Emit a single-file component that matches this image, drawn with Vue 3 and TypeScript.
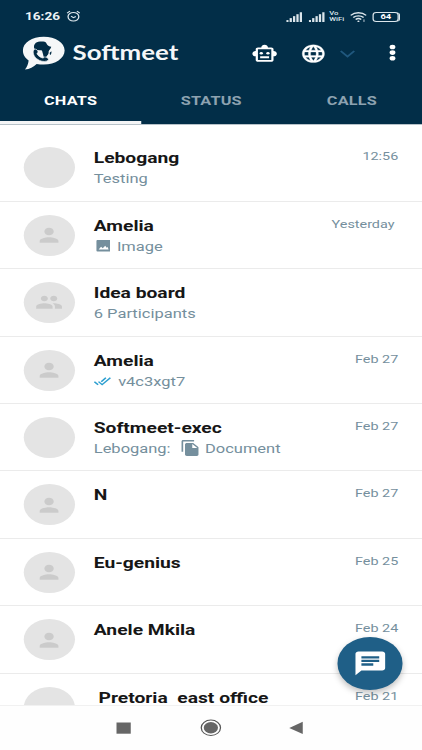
<script setup lang="ts">
type Avatar = 'blank' | 'person' | 'group'
type Attachment = 'image' | 'read' | 'document'

interface Chat {
  name: string
  avatar: Avatar
  date: string
  dateInset?: boolean
  sender?: string
  icon?: Attachment
  preview?: string
}

const tabs: string[] = ['CHATS', 'STATUS', 'CALLS']
const signalLevels: number[] = [1, 2, 3, 4, 5]

const chats: Chat[] = [
  { name: 'Lebogang', avatar: 'blank', date: '12:56', preview: 'Testing' },
  { name: 'Amelia', avatar: 'person', date: 'Yesterday', dateInset: true, icon: 'image', preview: 'Image' },
  { name: 'Idea board', avatar: 'group', date: '', preview: '6 Participants' },
  { name: 'Amelia', avatar: 'person', date: 'Feb 27', icon: 'read', preview: 'v4c3xgt7' },
  { name: 'Softmeet-exec', avatar: 'blank', date: 'Feb 27', sender: 'Lebogang:', icon: 'document', preview: 'Document' },
  { name: 'N', avatar: 'person', date: 'Feb 27' },
  { name: 'Eu-genius', avatar: 'person', date: 'Feb 25' },
  { name: 'Anele Mkila', avatar: 'person', date: 'Feb 24' },
  { name: ' Pretoria  east office', avatar: 'blank', date: 'Feb 21' },
]
</script>

<template>
  <div class="viewport">
    <div class="phone">
      <header class="header">
        <div class="status-bar">
          <span class="clock">16:26</span>
          <svg class="alarm" viewBox="0 0 12 13" fill="none" stroke="#dce6ec" stroke-width="1.1">
            <circle cx="6" cy="7" r="4.5" />
            <path d="M4 6.4l2 1.6 2-1.2M.7 3.2l2.4-2M11.3 3.2l-2.400-2" />
          </svg>
          <div class="status-icons">
            <svg v-for="n in 2" :key="n" class="signal" viewBox="0 0 13 10" fill="#dce6ec">
              <rect v-for="l in signalLevels" :key="l" :x="(l - 1) * 2.7" :y="10 - l * 1.95" width="1.8" :height="l * 1.95" />
            </svg>
            <span class="vowifi"><span>Vo</span><span>WiFi</span></span>
            <svg class="wifi" viewBox="0 0 14 11" fill="none" stroke="#dce6ec" stroke-width="1.35">
              <path d="M.6 3.8C4.2.2 9.8.2 13.4 3.8M2.7 6c2.4-2.3 6.2-2.3 8.6 0M4.7 8.1c1.3-1.2 3.3-1.2 4.6 0" />
              <circle cx="7" cy="9.900" r=".9" fill="#dce6ec" stroke="none" />
              <path d="M11.600 8v2.600" stroke-width=".8" />
            </svg>
            <span class="battery">64</span>
          </div>
        </div>

        <div class="app-bar">
          <svg class="logo" viewBox="0 0 34 34">
            <path fill="#f5f7f8" d="M17 .7C7.600.7.300 6.700.300 14.500c0 4.400 2 7.700 4.600 9.900C4.700 27.500 3.600 30.700 2 33.600c3.600-.7 7-2.800 9.300-5.700 1.800.4 3.700.6 5.700.6 9.400 0 16.700-6.200 16.700-14S26.400.7 17 .7z" />
            <path fill="#022c45" d="M9.400 8.900c.8-1.500 1.700-2.800 3.200-3.100 1.700-.4 3.500-.6 5.100 0 1.300.6 1.500 2 2.100 3 .8.900 1.500 1.700 3.200 2-.2 2-1.700 3.100-2.100 4.700.2 1.700-.3 3-1.200 4.100-.4 1.200-1.200 2-2.300 1.800-1-1.300-.7-2.800-1.200-4.100-.4-1.200-.2-2.400-1.100-3-1.900-.3-4.300.2-5.400-1.600-.7-1.200-.6-2.500-.3-3.800z" />
            <path fill="#022c45" stroke="#f5f7f8" stroke-width=".6" d="M9.600 13.300c1.500-.9 2.900 1.500 2.900 3l-1 1.100c.9 2.400 2.600 4 4.900 4.700l1.200-1.100c1.500-.1 3.700 1.600 3.100 2.900-1.500 2-4.500 2-7.100.5-3.300-2-5.300-5.400-5-8.900.1-1 .4-1.800 1-2.200z" />
            <path fill="#022c45" d="M21.900 16.500l1.200-1.200c.2 1.400 0 2.700-.8 3.700-.6-.8-.6-1.600-.4-2.500z" />
          </svg>
          <h1 class="brand">Softmeet</h1>
          <svg class="robot" viewBox="0 0 24 24" fill="#fff">
            <path d="M20 9V7c0-1.100-.9-2-2-2h-3c0-1.660-1.340-3-3-3S9 3.340 9 5H6c-1.100 0-2 .9-2 2v2c-1.660 0-3 1.340-3 3s1.340 3 3 3v4c0 1.100.9 2 2 2h12c1.100 0 2-.9 2-2v-4c1.660 0 3-1.340 3-3s-1.340-3-3-3zm-2 10H6V7h12v12z" />
            <circle cx="9" cy="11.500" r="1.500" />
            <circle cx="15" cy="11.500" r="1.500" />
            <path d="M8 15h8v2H8z" />
          </svg>
          <svg class="globe" viewBox="0 0 24 24" fill="#fff">
            <path d="M11.990 2C6.470 2 2 6.480 2 12s4.470 10 9.990 10C17.520 22 22 17.520 22 12S17.520 2 11.990 2zm6.930 6h-2.950c-.32-1.250-.78-2.450-1.380-3.560 1.840.63 3.370 1.910 4.330 3.560zM12 4.040c.83 1.200 1.480 2.530 1.910 3.960h-3.820c.43-1.430 1.080-2.760 1.910-3.960zM4.260 14C4.100 13.360 4 12.690 4 12s.1-1.360.26-2h3.380c-.08.66-.14 1.320-.14 2 0 .68.06 1.340.14 2H4.260zm.82 2h2.950c.32 1.250.78 2.450 1.380 3.560-1.840-.63-3.370-1.900-4.330-3.560zm2.950-8H5.080c.96-1.660 2.490-2.930 4.330-3.560C8.810 5.550 8.350 6.750 8.030 8zM12 19.960c-.83-1.200-1.480-2.530-1.910-3.960h3.820c-.43 1.430-1.080 2.760-1.910 3.960zM14.340 14H9.660c-.09-.66-.16-1.320-.16-2 0-.68.07-1.350.16-2h4.680c.09.65.16 1.320.16 2 0 .68-.07 1.340-.16 2zm.25 5.560c.6-1.110 1.060-2.310 1.380-3.560h2.950c-.96 1.650-2.490 2.930-4.330 3.560zM16.360 14c.08-.66.14-1.320.14-2 0-.68-.06-1.340-.14-2h3.380c.16.64.26 1.310.26 2s-.1 1.360-.26 2h-3.380z" stroke="#fff" stroke-width=".3" />
          </svg>
          <svg class="chevron" viewBox="0 0 12 8" fill="none" stroke="#20587e" stroke-width="1.700">
            <path d="M.6 1L6 6.600 11.400 1" />
          </svg>
          <svg class="dots" viewBox="0 0 6 18" fill="#fff">
            <circle cx="3" cy="3" r="2.300" />
            <circle cx="3" cy="8.600" r="2.300" />
            <circle cx="3" cy="14.200" r="2.300" />
          </svg>
        </div>

        <nav class="tabs">
          <span v-for="(tab, i) in tabs" :key="tab" class="tab" :class="{ active: i === 0 }">{{ tab }}</span>
        </nav>
      </header>

      <main class="list">
        <article v-for="(chat, i) in chats" :key="i" class="chat">
          <div class="avatar">
            <svg v-if="chat.avatar === 'person'" viewBox="0 0 24 24" fill="#cbcbcb">
              <path d="M12 12c2.210 0 4-1.790 4-4s-1.790-4-4-4-4 1.790-4 4 1.790 4 4 4zm0 2c-2.670 0-8 1.340-8 4v2h16v-2c0-2.660-5.330-4-8-4z" />
            </svg>
            <svg v-else-if="chat.avatar === 'group'" viewBox="0 0 24 24" fill="#cbcbcb">
              <path d="M16 11c1.660 0 2.990-1.340 2.990-3S17.660 5 16 5c-1.660 0-3 1.340-3 3s1.340 3 3 3zm-8 0c1.660 0 2.990-1.340 2.990-3S9.660 5 8 5C6.340 5 5 6.340 5 8s1.340 3 3 3zm0 2c-2.330 0-7 1.170-7 3.500V19h14v-2.500c0-2.330-4.670-3.500-7-3.500zm8 0c-.29 0-.62.02-.97.05 1.160.84 1.970 1.970 1.970 3.450V19h6v-2.500c0-2.330-4.670-3.500-7-3.500z" />
            </svg>
          </div>
          <div class="body">
            <h2 class="name">{{ chat.name }}</h2>
            <p v-if="chat.preview" class="preview">
              <span v-if="chat.sender" class="sender">{{ chat.sender }}</span>
              <svg v-if="chat.icon === 'image'" class="icon-image" viewBox="0 0 12 12">
                <rect width="12" height="12" rx="1" fill="#758f9d" />
                <path d="M2 9.800l2-2.800 1.400 1.600L7.500 6l1.200 2 .8-.8.800 2.600z" fill="#fff" />
              </svg>
              <svg v-else-if="chat.icon === 'read'" class="icon-read" viewBox="0 0 14 9" fill="none" stroke="#2d9fd0" stroke-width="1.300">
                <path d="M.5 4.800l3 3M3.800 4.600l2.900 3L13.300.8M6 4.700L9.700.8" />
              </svg>
              <svg v-else-if="chat.icon === 'document'" class="icon-document" viewBox="2 1 19 22" fill="#758f9d">
                <path d="M16 1H4c-1.100 0-2 .9-2 2v14h2V3h12V1zm-1 4l6 6v10c0 1.100-.9 2-2 2H7.990C6.890 23 6 22.100 6 21l.01-14c0-1.100.89-2 1.990-2h7zm-1 7h5.500L14 6.500V12z" />
              </svg>
              <span>{{ chat.preview }}</span>
            </p>
          </div>
          <time class="date" :class="{ inset: chat.dateInset }">{{ chat.date }}</time>
        </article>
      </main>

      <footer class="nav-bar">
        <svg viewBox="0 0 18 18" fill="#666"><rect x="3.200" y="3.500" width="11.400" height="11.200" /></svg>
        <svg viewBox="0 0 18 18">
          <circle cx="8.700" cy="8.800" r="7.700" fill="none" stroke="#555" stroke-width="1" />
          <circle cx="8.700" cy="8.800" r="5.700" fill="#666" />
        </svg>
        <svg viewBox="0 0 18 18" fill="#666"><path d="M1.400 8.900L12.200 2.700v12.400z" /></svg>
      </footer>

      <button class="fab" aria-label="New chat">
        <svg viewBox="0 0 24 24" fill="#fff">
          <path d="M20 2H4c-1.100 0-1.990.9-1.990 2L2 22l4-4h14c1.100 0 2-.9 2-2V4c0-1.100-.9-2-2-2zM6 9h12v2H6V9zm8 5H6v-2h8v2zm4-6H6V6h12v2z" />
        </svg>
      </button>
    </div>
  </div>
</template>

<style>
body {
  margin: 0;
  background: #fff;
}
</style>

<style scoped>
.viewport {
  width: 422px;
  height: 750px;
  overflow: hidden;
}

/* Narrow layout widened to fill the window */
.phone {
  position: relative;
  display: flex;
  flex-direction: column;
  width: 337.6px;
  height: 750px;
  overflow: hidden;
  transform: scaleX(1.25);
  transform-origin: 0 0;
  background: #fff;
  font-family: Roboto, "Liberation Sans", sans-serif;
}

svg {
  display: block;
  flex: none;
}

.header {
  flex: none;
  box-sizing: border-box;
  height: 125px;
  background: #022e48;
  border-bottom: 1px solid #b7c2c9;
  color: #fff;
}

.status-bar {
  display: flex;
  align-items: center;
  height: 33px;
  padding: 0 18.700px 0 20px;
  box-sizing: border-box;
}

.clock {
  font-size: 10.900px;
  font-weight: 700;
  color: #eef3f6;
}

.alarm {
  width: 11.500px;
  height: 12.500px;
  margin-left: 5px;
}

.status-icons {
  display: flex;
  align-items: center;
  margin-left: auto;
}

.signal {
  width: 13px;
  height: 10px;
  margin-right: 4.300px;
}

.vowifi {
  display: flex;
  flex-direction: column;
  width: 12.500px;
  margin: 0 4.500px 0 -0.500px;
  font-size: 6.200px;
  line-height: 5.500px;
  font-weight: 500;
  color: #dce6ec;
}

.wifi {
  width: 13.500px;
  height: 12px;
  margin-right: 4.500px;
}

.battery {
  box-sizing: border-box;
  width: 20.500px;
  height: 10px;
  border: 1px solid #dce6ec;
  border-radius: 3px;
  font-size: 7.500px;
  line-height: 8px;
  font-weight: 700;
  text-align: center;
  box-shadow: 1.500px 0 0 -0.500px #dce6ec;
}

.app-bar {
  display: flex;
  align-items: center;
  height: 42px;
  padding-left: 18.400px;
}

.logo {
  width: 34px;
  height: 34px;
  margin-bottom: 3px;
}

.brand {
  width: 138px;
  margin: 0 0 4px 5.700px;
  font-family: Lato, sans-serif;
  font-size: 20.700px;
  line-height: 24px;
  font-weight: 700;
  color: #f5f7f8;
}

.robot {
  width: 21.400px;
  height: 21.400px;
  margin-left: 5px;
}

.globe {
  width: 21.400px;
  height: 21.400px;
  margin-left: 18px;
}

.chevron {
  width: 12px;
  height: 8px;
  margin-left: 10px;
}

.dots {
  width: 6px;
  height: 18px;
  margin: 0 0 2px 27px;
}

.tabs {
  display: grid;
  grid-template-columns: repeat(3, 1fr);
  height: 49px;
}

.tab {
  box-sizing: border-box;
  height: 49px;
  padding: 17px 0 0 0.400px;
  text-align: center;
  font-size: 13px;
  line-height: 18px;
  font-weight: 700;
  letter-spacing: 0.150px;
  color: #8da2b0;
}

.tab.active {
  color: #fff;
  border-bottom: 3px solid #f4f5f6;
}

.list {
  flex: 1;
  min-height: 0;
  padding-top: 9.300px;
  overflow: hidden;
}

.chat {
  display: flex;
  box-sizing: border-box;
  height: 67.430px;
  padding: 13px 19px 0 19px;
  border-bottom: 1px solid #ebebeb;
}

.avatar {
  flex: none;
  display: flex;
  align-items: center;
  justify-content: center;
  width: 41px;
  height: 41px;
  border-radius: 50%;
  background: #e4e4e4;
}

.avatar svg {
  width: 22.500px;
  height: 22.500px;
}

.body {
  flex: 1;
  margin-left: 15px;
  padding-top: 1px;
}

.name {
  margin: 0;
  font-size: 15.400px;
  line-height: 20px;
  font-weight: 700;
  white-space: pre;
  color: #161616;
}

.preview {
  display: flex;
  align-items: center;
  margin: 0;
  height: 21px;
  font-size: 13.200px;
  line-height: 21px;
  white-space: nowrap;
  color: #758f9d;
}

.sender {
  margin-right: 8.500px;
}

.icon-image {
  width: 11.500px;
  height: 11.500px;
  margin: 0 5.500px 0 1.500px;
}

.icon-read {
  width: 14px;
  height: 9px;
  margin-right: 5.500px;
}

.icon-document {
  width: 14px;
  height: 16px;
  margin-right: 5px;
}

.date {
  padding-top: 2px;
  font-size: 11.500px;
  line-height: 15px;
  color: #758f9d;
}

.date.inset {
  padding-right: 3px;
}

.nav-bar {
  flex: none;
  display: flex;
  justify-content: center;
  gap: 52px;
  box-sizing: border-box;
  height: 45.500px;
  padding-top: 13px;
  border-top: 1px solid #f1f1f1;
  background: #fefefe;
}

.nav-bar svg {
  width: 18px;
  height: 18px;
}

.fab {
  position: absolute;
  right: 15.200px;
  bottom: 60.200px;
  display: flex;
  align-items: center;
  justify-content: center;
  width: 52.600px;
  height: 52.600px;
  padding: 0;
  border: 0;
  border-radius: 50%;
  background: #1f5f87;
  box-shadow: 0 3px 6px rgba(0, 0, 0, 0.25);
}

.fab svg {
  width: 28.500px;
  height: 28.500px;
}
</style>
